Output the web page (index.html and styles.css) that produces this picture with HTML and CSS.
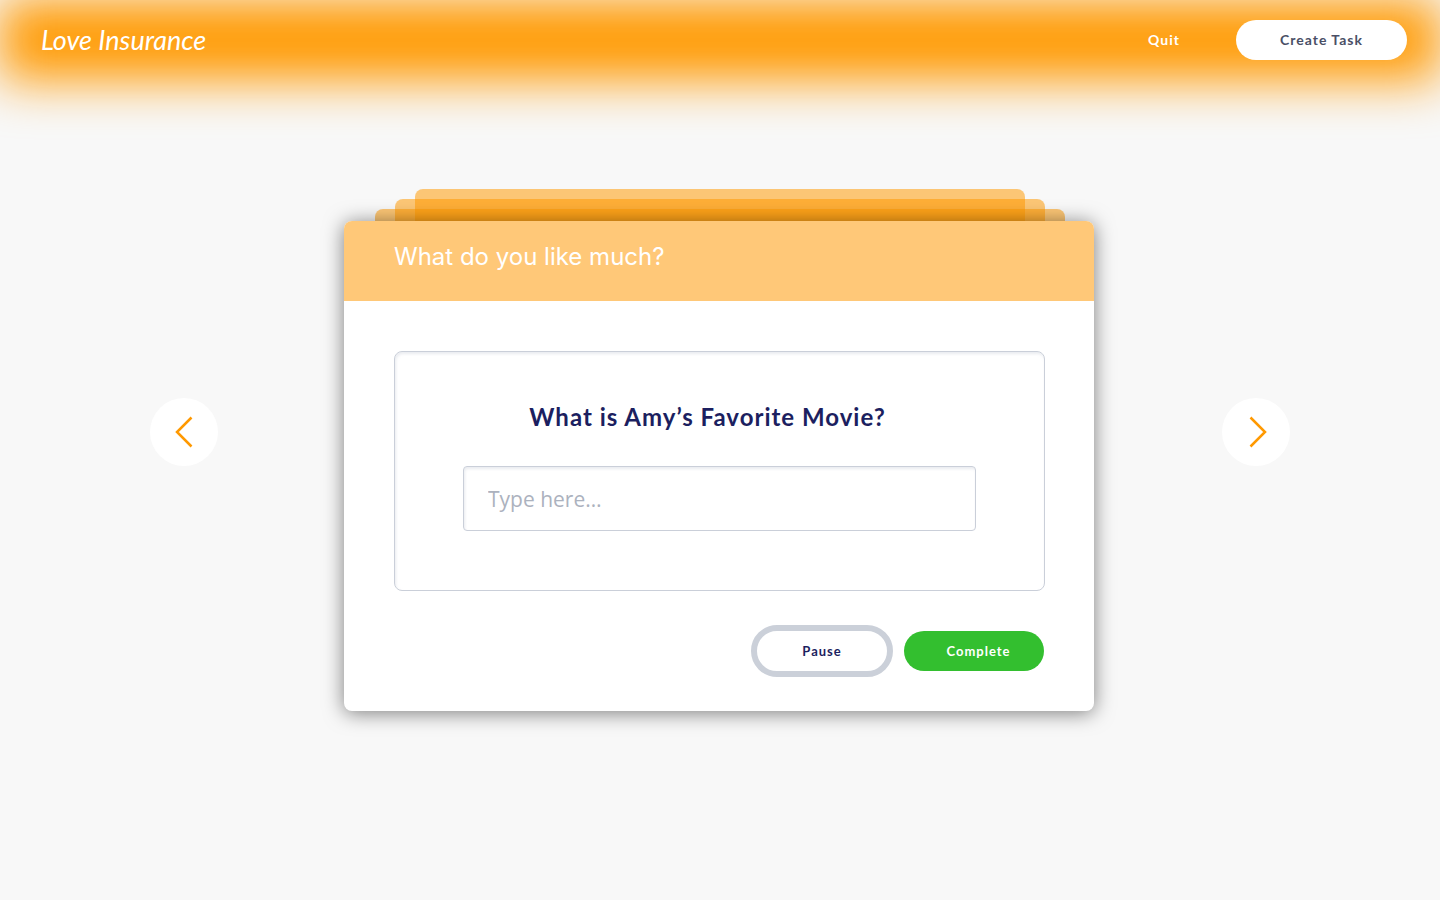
FILE: index.html
```html
<!DOCTYPE html>
<html lang="en">
<head>
<meta charset="utf-8">
<meta name="viewport" content="width=device-width, initial-scale=1">
<title>Love Insurance</title>
<link rel="stylesheet" href="styles.css">
</head>
<body>
<header class="topbar">
  <a class="logo" href="#">Love Insurance</a>
  <nav class="topnav">
    <a class="quit" href="#">Quit</a>
    <button class="create" type="button">Create Task</button>
  </nav>
</header>
<main class="stage">
  <button class="arrow" type="button" aria-label="Previous">
    <svg width="68" height="68" viewBox="0 0 68 68" fill="none"><path d="M41.500 19.500 27 34 41.500 48.500" stroke="#ff9900" stroke-width="2.500"/></svg>
  </button>
  <section class="deck">
    <div class="layer layer-back"></div>
    <div class="layer layer-middle"></div>
    <div class="layer layer-front"></div>
    <form class="card">
      <header class="card-head"><h1 class="card-title">What do you like much?</h1></header>
      <div class="card-body">
        <div class="panel">
          <label class="question" for="answer">What is Amy’s Favorite Movie?</label>
          <input class="answer" id="answer" type="text" placeholder="Type here…">
        </div>
        <div class="actions">
          <button class="pause" type="button">Pause</button>
          <button class="complete" type="submit">Complete</button>
        </div>
      </div>
    </form>
  </section>
  <button class="arrow" type="button" aria-label="Next">
    <svg width="68" height="68" viewBox="0 0 68 68" fill="none"><path d="M28.500 19.500 43 34 28.500 48.500" stroke="#ff9900" stroke-width="2.500"/></svg>
  </button>
</main>
</body>
</html>
```
FILE: styles.css
```css
* { box-sizing: border-box; }
body {
  margin: 0;
  min-height: 100vh;
  background: #f8f8f8;
  font-family: Lato, sans-serif;
  overflow-x: hidden;
}
button { border: 0; padding: 0; font-family: inherit; cursor: pointer; }
a { text-decoration: none; }

.topbar {
  position: relative;
  display: flex;
  align-items: center;
  justify-content: space-between;
  height: 80px;
  padding: 0 33px 0 41px;
}
.topbar::before {
  content: "";
  position: absolute;
  inset: 0;
  z-index: -1;
  background: #ff9900;
  filter: blur(25px);
}
.logo {
  font: italic 400 27px/32px Lato, cursive;
  color: #fff;
}
.topnav {
  display: flex;
  align-items: center;
  gap: 56px;
  font: 700 14px/20px Lato, sans-serif;
  letter-spacing: 1px;
}
.quit { color: #fff; }
.create {
  width: 171px;
  height: 40px;
  border-radius: 20px;
  background: #fff;
  color: #4a4f66;
  font: inherit;
  letter-spacing: inherit;
}

.stage {
  display: flex;
  align-items: flex-start;
  justify-content: space-between;
  padding: 109px 150px 60px;
}
.arrow {
  flex: none;
  width: 68px;
  height: 68px;
  margin-top: 209px;
  border-radius: 50%;
  background: #fff;
}
.arrow svg { display: block; }

.deck {
  position: relative;
  flex: 0 1 752px;
  padding: 32px 2px 0 0;
}
.layer {
  position: absolute;
  border-radius: 8px 8px 0 0;
  background: rgba(255, 153, 0, 0.53);
}
.layer-back { top: 0; left: 71px; right: 71px; height: 32px; }
.layer-middle { top: 10px; left: 51px; right: 51px; height: 22px; }
.layer-front { top: 20px; left: 31px; right: 31px; height: 12px; }

.card {
  position: relative;
  border-radius: 8px;
  background: #fff;
  box-shadow: 0 2px 20px rgba(0, 0, 0, 0.5);
}
.card-head {
  padding: 20px 50px 28px;
  border-radius: 8px 8px 0 0;
  background: #ffc878;
}
.card-title {
  margin: 0;
  font: 400 24px/32px Inter, sans-serif;
  color: #fff;
}
.card-body { padding: 50px 49px 34px 50px; }
.panel {
  padding: 49px 68px 59px;
  border: 1px solid #cacfd9;
  border-radius: 8px;
  box-shadow: inset 1px 2px 3px rgba(202, 207, 217, 0.4);
}
.question {
  display: block;
  margin-bottom: 33px;
  padding-right: 24px;
  font-size: 24px;
  font-weight: 700;
  line-height: 32px;
  letter-spacing: 1px;
  text-align: center;
  color: #1c1f60;
}
.answer {
  display: block;
  width: 100%;
  height: 65px;
  padding: 0 24px;
  border: 1px solid #cacfd9;
  border-radius: 4px;
  background: #fff;
  box-shadow: inset 1px 2px 3px rgba(202, 207, 217, 0.4);
  font: 400 21px/32px "Open Sans", sans-serif;
  color: #1c1f60;
}
.answer::placeholder { color: #acb2be; opacity: 1; }
.actions {
  display: flex;
  align-items: center;
  justify-content: flex-end;
  gap: 11px;
  margin-top: 34px;
  padding-right: 1px;
}
.pause, .complete {
  font-size: 13px;
  font-weight: 700;
  line-height: 20px;
  letter-spacing: 1px;
}
.pause {
  width: 142px;
  height: 52px;
  border: 6px solid #cbd0d9;
  border-radius: 26px;
  background: #fff;
  color: #1c1f60;
}
.complete {
  width: 140px;
  height: 40px;
  padding-left: 9px;
  border-radius: 20px;
  background: #33bf2f;
  color: #fff;
}
```
